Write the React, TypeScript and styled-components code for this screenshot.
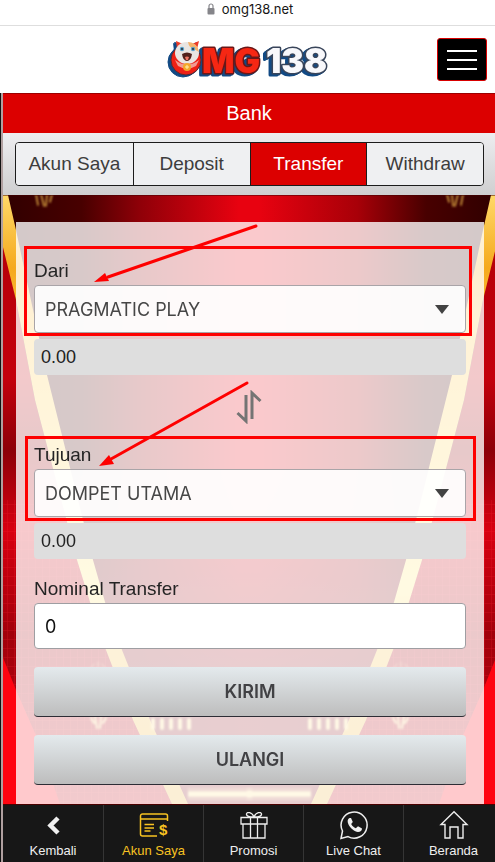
import React, { useState } from "react";
import styled, { createGlobalStyle, css } from "styled-components";

const GlobalStyle = createGlobalStyle`
  *, *::before, *::after { box-sizing: border-box; }
  body { margin: 0; background: #fff; font-family: "Liberation Sans", Arial, sans-serif; }
  button, input, select { font: inherit; margin: 0; }
`;

const RED = "#dc0000";

const Page = styled.div`
  min-height: 100vh;
  display: flex;
  flex-direction: column;
  overflow-x: clip;
`;

const AddressBar = styled.div`
  height: 26px;
  padding-bottom: 8px;
  display: flex;
  align-items: center;
  justify-content: center;
  gap: 7px;
  padding-left: 5px;
  border-bottom: 1px solid #dedede;
  font-family: Inter, sans-serif;
  font-size: 13px;
  line-height: 18px;
  color: #161616;
`;

const Header = styled.header`
  height: 67px;
  padding: 0 8px;
  display: grid;
  grid-template-columns: 1fr auto 1fr;
  align-items: center;
`;

const LogoLink = styled.a`
  grid-column: 2;
  display: block;
  line-height: 0;
`;

const MenuButton = styled.button`
  justify-self: end;
  width: 50px;
  height: 43px;
  padding: 0;
  display: grid;
  place-items: center;
  background: #000;
  border: 1px solid #d80000;
  border-radius: 3px;
`;

const Frame = styled.div`
  flex: 1;
  display: flex;
  flex-direction: column;
  border-left: 1px solid #111;
`;

const FrameInner = styled.div`
  flex: 1;
  display: flex;
  flex-direction: column;
  border-left: 2px solid #b0a0a0;
`;

const TitleBar = styled.h1`
  margin: 0;
  height: 40px;
  background: ${RED};
  border-top: 1px solid #9c0000;
  color: #fff;
  font-size: 20px;
  font-weight: 400;
  line-height: 38px;
  text-align: center;
`;

const TabStrip = styled.nav`
  padding: 9px 11px 9px 12px;
  background: linear-gradient(#ededf0, #cfcfd0);
`;

const TabGroup = styled.div`
  height: 44px;
  display: grid;
  grid-template-columns: repeat(4, 1fr);
  border: 1px solid #1c1c1c;
  border-radius: 4px;
  overflow: hidden;
`;

const Tab = styled.button<{ $active?: boolean }>`
  padding: 0;
  border: 0;
  background: ${(p) => (p.$active ? RED : "#eff0f2")};
  color: ${(p) => (p.$active ? "#fff" : "#3d3d3d")};
  font-size: 19px;
  line-height: 24px;
  white-space: nowrap;
  & + & { border-left: 1px solid #1c1c1c; }
`;

const Stage = styled.main`
  position: relative;
  flex: 1;
  padding: 27px 11px 0 13px;
  display: flex;
  flex-direction: column;
`;

const Backdrop = styled.svg`
  position: absolute;
  inset: 0;
  width: 100%;
  height: 100%;
`;

const Card = styled.form`
  position: relative;
  flex: 1;
  padding: 38px 18px 19px;
  background: rgba(255, 255, 255, 0.79);
`;

const Field = styled.div`
  position: relative;
`;

const Label = styled.label`
  display: block;
  padding-bottom: 3px;
  color: #242424;
  font-size: 19px;
  line-height: 22px;
`;

const SelectBox = styled.div`
  display: grid;
  align-items: center;
  > * { grid-area: 1 / 1; }
  > svg { justify-self: end; margin-right: 17px; pointer-events: none; }
`;

const Select = styled.select`
  appearance: none;
  width: 100%;
  height: 48px;
  padding: 0 36px 0 10px;
  border: 1px solid #a9a4a8;
  border-radius: 4px;
  background: rgba(255, 255, 255, 0.9);
  color: #464646;
  font-family: Inter, sans-serif;
  font-size: 18px;
`;

const Balance = styled.output`
  display: block;
  margin-top: 6px;
  padding: 0 7px;
  border-radius: 4px;
  background: #dedede;
  color: #222;
  font-size: 18px;
  line-height: 36px;
`;

const SwapRow = styled.div`
  height: 69px;
  display: grid;
  place-items: center;
  padding: 0 2px 5px 0;
`;

const SwapButton = styled.button`
  padding: 0;
  border: 0;
  background: none;
  line-height: 0;
`;

const AmountField = styled(Field)`
  margin-top: 19px;
`;

const AmountInput = styled.input`
  display: block;
  width: 100%;
  height: 46px;
  padding: 0 10px;
  border: 1px solid #9e9ea2;
  border-radius: 4px;
  background: #fff;
  color: #111;
  font-family: Inter, sans-serif;
  font-size: 18px;
`;

const ActionButton = styled.button`
  display: block;
  width: 100%;
  height: 50px;
  margin-top: 18px;
  padding: 0;
  border: 0;
  border-bottom: 1px solid #2d2d35;
  border-radius: 4px;
  background: linear-gradient(#e4eaed, #bdbdbd);
  color: #414144;
  font-family: Inter, sans-serif;
  font-size: 18px;
  font-weight: 600;
`;

const Highlight = styled.div<{ $wide?: boolean }>`
  position: absolute;
  pointer-events: none;
  border: 3px solid #fe0000;
  ${(p) =>
    p.$wide
      ? css`inset: -8px -10px -4px -9px;`
      : css`inset: -14px -6px -3px -10px;`}
`;

const Arrow = styled.svg<{ $second?: boolean }>`
  position: absolute;
  overflow: visible;
  pointer-events: none;
  left: 0;
  top: ${(p) => (p.$second ? "-64px" : "-38px")};
`;

const BottomNav = styled.nav`
  position: relative;
  height: 58px;
  margin-right: -8px;
  display: grid;
  grid-template-columns: repeat(5, 1fr);
  background: #171717;
  border-top: 1px solid #4a0000;
`;

const NavLink = styled.a<{ $active?: boolean }>`
  display: flex;
  flex-direction: column;
  align-items: center;
  gap: 2px;
  padding-top: 5px;
  color: ${(p) => (p.$active ? "#f8c322" : "#efefef")};
  font-size: 13px;
  line-height: 18px;
  text-decoration: none;
  & + & { border-left: 1px solid #353535; }
`;

const LockIcon = () => (
  <svg width="8" height="12" viewBox="0 0 8 12" aria-hidden="true">
    <rect x="0.5" y="5" width="7" height="6.5" rx="1" fill="#85858a" />
    <path d="M2 5.500V3a2 2 0 0 1 4 0v2.500" fill="none" stroke="#85858a" strokeWidth="1.200" />
  </svg>
);

const LogoSvg = styled.svg`
  font-family: Inter, sans-serif;
  font-weight: 900;
  font-size: 34px;
  overflow: visible;
  filter: drop-shadow(-2px 1px 0 #124a84) drop-shadow(-1px 1px 0 #124a84);
`;

const Logo = () => (
  <LogoSvg width="158" height="50" viewBox="0 0 158 50" role="img" aria-label="OMG138">
    <circle cx="17" cy="25" r="15" fill="#ee2015" stroke="#5b2a30" strokeWidth="1" />
    <g strokeLinejoin="round" strokeWidth="3" paintOrder="stroke">
      <text x="33" y="38" fill="#f62713" stroke="#6a1717">MG</text>
      <text x="97" y="38" fill="#f8f8fb" stroke="#39455a">138</text>
    </g>
    <path d="M7 6l7 3-6 5zM30 6l-7 3 5 5z" fill="#ee3b26" />
    <ellipse cx="18" cy="18" rx="12" ry="11" fill="#e9e5e2" />
    <path d="M19 7q9 0 11 10l-5-3q-5-1-6-7z" fill="#f5b26b" />
    <circle cx="13" cy="14" r="2.200" fill="#5ba2cb" />
    <circle cx="24" cy="14" r="2.200" fill="#5ba2cb" />
    <circle cx="13" cy="14" r="0.900" fill="#222" />
    <circle cx="24" cy="14" r="0.900" fill="#222" />
    <path d="M13 19q5-3 10 0-1 7-5 7t-5-7z" fill="#51201b" />
    <path d="M16 22q2-1 4 0l-1 3h-2z" fill="#ee7464" />
    <path d="M6 25q12 9 24 0l-3 6q-9 5-18 0z" fill="#f2ece6" opacity="0.600" />
    <circle cx="18" cy="32" r="4" fill="#f4a62a" />
    <path d="M16 32h4M18 30v4" stroke="#fff0a8" strokeWidth="1" />
  </LogoSvg>
);

const MenuIcon = () => (
  <svg width="30" height="22" viewBox="0 0 30 22" aria-hidden="true">
    <path d="M0 2h30M0 11h30M0 20h30" stroke="#fff" strokeWidth="2" />
  </svg>
);

const Caret = () => (
  <svg width="14" height="9" viewBox="0 0 14 9" aria-hidden="true">
    <path d="M0 0h14L7 9z" fill="#424242" />
  </svg>
);

const SwapIcon = () => (
  <svg width="26" height="34" viewBox="0 0 26 34" aria-hidden="true">
    <path d="M10 5v26l-8.500-8M16 29V3l8.500 8" fill="none" stroke="#747474" strokeWidth="3" />
  </svg>
);

const navIcon = { width: 30, height: 30, viewBox: "0 0 30 30", fill: "none", stroke: "currentColor", "aria-hidden": true } as const;

const BackIcon = () => (
  <svg {...navIcon}>
    <path d="M20 8L12.500 15.500l7.500 7.500" strokeWidth="4.500" />
  </svg>
);

const AccountIcon = () => (
  <svg {...navIcon} strokeWidth="1.500">
    <path d="M18 26H3.500a2 2 0 0 1-2-2V6a2 2 0 0 1 2-2h23a2 2 0 0 1 2 2v5M1.500 9h27M5.500 14.500H15M5.500 18H15M5.500 21h6" />
    <text x="20" y="25" fontFamily="Liberation Sans, sans-serif" fontWeight="700" fontSize="15" fill="currentColor" stroke="none">$</text>
  </svg>
);

const GiftIcon = () => (
  <svg {...navIcon} strokeWidth="1.300">
    <path d="M2 7.500h26V14H2zM4 14h22v14H4zM11.500 7.500V28M18.500 7.500V28M15 7C11 7 7 6.500 7.500 4S13 2 15 7c2-5 7-5.500 7.500-3S19 7 15 7z" />
  </svg>
);

const ChatIcon = () => (
  <svg {...navIcon}>
    <path d="M2 28.500l1.500-7.500A13 13 0 1 1 9 26.600z" strokeWidth="1.500" />
    <path d="M10.500 8c-2 1-2.500 3.500-1 6.500 2 4 6 7 9.500 7.500 2.500 0 4-1.500 4-3.500l-4-2.200-2.200 2c-2-.8-3.600-2.300-4.600-4.300l1.600-2-1.800-4z" fill="currentColor" stroke="none" />
  </svg>
);

const HomeIcon = () => (
  <svg {...navIcon} strokeWidth="1.400">
    <path d="M15 1.800L2 14.500h4V28h5V17h8v11h5V14.500h4z" />
  </svg>
);

const fringe = [153, 162, 171, 180, 189];

const StageBackdrop = () => (
  <Backdrop viewBox="3 195 492 609" preserveAspectRatio="none" aria-hidden="true">
    <defs>
      <linearGradient id="curtain">
        <stop offset="0" stopColor="#300000" />
        <stop offset="0.160" stopColor="#480000" />
        <stop offset="0.280" stopColor="#900008" />
        <stop offset="0.480" stopColor="#e80210" />
        <stop offset="0.520" stopColor="#e80210" />
        <stop offset="0.720" stopColor="#a80008" />
        <stop offset="0.860" stopColor="#480000" />
        <stop offset="1" stopColor="#300000" />
      </linearGradient>
      <linearGradient id="shade" x1="0" y1="0" x2="0" y2="1">
        <stop offset="0.450" stopColor="#9a1824" stopOpacity="0" />
        <stop offset="0.800" stopColor="#861f28" stopOpacity="0.850" />
      </linearGradient>
      <linearGradient id="wing" x1="0" y1="0" x2="0" y2="1">
        <stop offset="0" stopColor="#b00008" />
        <stop offset="0.300" stopColor="#c4000c" />
        <stop offset="0.420" stopColor="#8c0008" />
        <stop offset="0.550" stopColor="#d80010" />
        <stop offset="0.720" stopColor="#a2000a" />
        <stop offset="1" stopColor="#c00814" />
      </linearGradient>
      <linearGradient id="gold" x1="0" y1="0" x2="0" y2="1">
        <stop offset="0" stopColor="#ffd968" />
        <stop offset="0.120" stopColor="#f5a91d" />
        <stop offset="0.220" stopColor="#ffc443" />
        <stop offset="0.650" stopColor="#ffe878" />
        <stop offset="0.750" stopColor="#f5c04c" />
        <stop offset="1" stopColor="#ecb33e" />
      </linearGradient>
      <filter id="soft"><feGaussianBlur stdDeviation="1" /></filter>
      <pattern id="weave" width="7" height="9" patternUnits="userSpaceOnUse">
        <path d="M0 0h7M0 0v9" stroke="#ff2636" strokeWidth="1" opacity="0.350" />
      </pattern>
      <g id="side">
        <path d="M0 195v609h172L133 720 106 650 77 560 35 400 14 290z" fill="url(#wing)" />
        <path d="M0 500h62L106 650 133 720 172 804H0z" fill="url(#weave)" />
        <path d="M0 650L16 690 38 740 60 804H0z" fill="#ff0410" />
        <path d="M0 195h8L16 230 32 305 47 375 93 560 105 602 122 650 150 720 188 804H172L133 720 106 650 90 602 77 560 35 400 16 300 0 235z" fill="url(#gold)" />
        <g stroke="#ffe08a" strokeLinecap="round" fill="none" filter="url(#soft)">
          <path d="M36 194l2 11M41 194l3 12M47 194l-1 12M52 194l-2 8" stroke="#dfa943" strokeWidth="1.500" />
          <path d="M91 718l3 5M95 716l2 12M101 716l-1 12M106 718l-3 5" strokeWidth="2" />
          {fringe.map((x) => (
            <path key={x} d={`M${x} 720v8`} strokeWidth="4" />
          ))}
          <path d="M91 668l3-4M98 667v-5M105 668l-3-4" strokeWidth="1" opacity="0.600" />
          <path d="M188 794h64" strokeWidth="6" strokeLinecap="butt" />
          <path d="M188 789h64M188 799h64" stroke="#ecb675" strokeWidth="1" />
        </g>
      </g>
    </defs>
    <rect x="3" y="195" width="492" height="609" fill="url(#curtain)" />
    <rect x="3" y="195" width="492" height="609" fill="url(#shade)" />
    <use href="#side" />
    <use href="#side" transform="translate(499 0) scale(-1 1)" />
    <path d="M3 195h492" stroke="#400" strokeWidth="2" opacity="0.500" />
  </Backdrop>
);

const tabs = ["Akun Saya", "Deposit", "Transfer", "Withdraw"];

const navItems = [
  { label: "Kembali", Icon: BackIcon },
  { label: "Akun Saya", Icon: AccountIcon, active: true },
  { label: "Promosi", Icon: GiftIcon },
  { label: "Live Chat", Icon: ChatIcon },
  { label: "Beranda", Icon: HomeIcon },
];

const wallets = ["PRAGMATIC PLAY", "DOMPET UTAMA"];

type WalletFieldProps = {
  id: string;
  label: string;
  value: string;
  onChange: (value: string) => void;
  children: React.ReactNode;
};

const WalletField = ({ id, label, value, onChange, children }: WalletFieldProps) => (
  <>
    <Field>
      <Label htmlFor={id}>{label}</Label>
      <SelectBox>
        <Select id={id} value={value} onChange={(e) => onChange(e.target.value)}>
          {wallets.map((w) => (
            <option key={w}>{w}</option>
          ))}
        </Select>
        <Caret />
      </SelectBox>
      {children}
    </Field>
    <Balance htmlFor={id}>0.00</Balance>
  </>
);

export default function App() {
  const [from, setFrom] = useState(wallets[0]);
  const [to, setTo] = useState(wallets[1]);
  const [amount, setAmount] = useState("0");

  const swap = () => {
    setFrom(to);
    setTo(from);
  };

  return (
    <Page>
      <GlobalStyle />
      <AddressBar>
        <LockIcon />
        <span>omg138.net</span>
      </AddressBar>
      <Header>
        <LogoLink href="#">
          <Logo />
        </LogoLink>
        <MenuButton type="button" aria-label="Menu">
          <MenuIcon />
        </MenuButton>
      </Header>
      <Frame>
        <FrameInner>
          <TitleBar>Bank</TitleBar>
          <TabStrip>
            <TabGroup>
              {tabs.map((t) => (
                <Tab key={t} type="button" $active={t === "Transfer"}>
                  {t}
                </Tab>
              ))}
            </TabGroup>
          </TabStrip>
          <Stage>
            <StageBackdrop />
            <Card onSubmit={(e) => e.preventDefault()}>
              <WalletField id="from" label="Dari" value={from} onChange={setFrom}>
                <Highlight />
                <Arrow width="232" height="62" viewBox="0 0 232 62" aria-hidden="true">
                  <path d="M222 4L74 55" stroke="#fe0000" strokeWidth="3" strokeLinecap="round" />
                  <path d="M60 60l11-9 4 8z" fill="#fe0000" />
                </Arrow>
              </WalletField>
              <SwapRow>
                <SwapButton type="button" aria-label="Tukar" onClick={swap}>
                  <SwapIcon />
                </SwapButton>
              </SwapRow>
              <WalletField id="to" label="Tujuan" value={to} onChange={setTo}>
                <Highlight $wide />
                <Arrow $second width="232" height="90" viewBox="0 0 232 90" aria-hidden="true">
                  <path d="M213 3L77 79" stroke="#fe0000" strokeWidth="3" strokeLinecap="round" />
                  <path d="M65 86l10-11 5 9z" fill="#fe0000" />
                </Arrow>
              </WalletField>
              <AmountField>
                <Label htmlFor="amount">Nominal Transfer</Label>
                <AmountInput id="amount" inputMode="decimal" value={amount} onChange={(e) => setAmount(e.target.value)} />
              </AmountField>
              <ActionButton type="submit">KIRIM</ActionButton>
              <ActionButton type="button" onClick={() => setAmount("0")}>ULANGI</ActionButton>
            </Card>
          </Stage>
          <BottomNav>
            {navItems.map(({ label, Icon, active }) => (
              <NavLink key={label} href="#" $active={active}>
                <Icon />
                <span>{label}</span>
              </NavLink>
            ))}
          </BottomNav>
        </FrameInner>
      </Frame>
    </Page>
  );
}
